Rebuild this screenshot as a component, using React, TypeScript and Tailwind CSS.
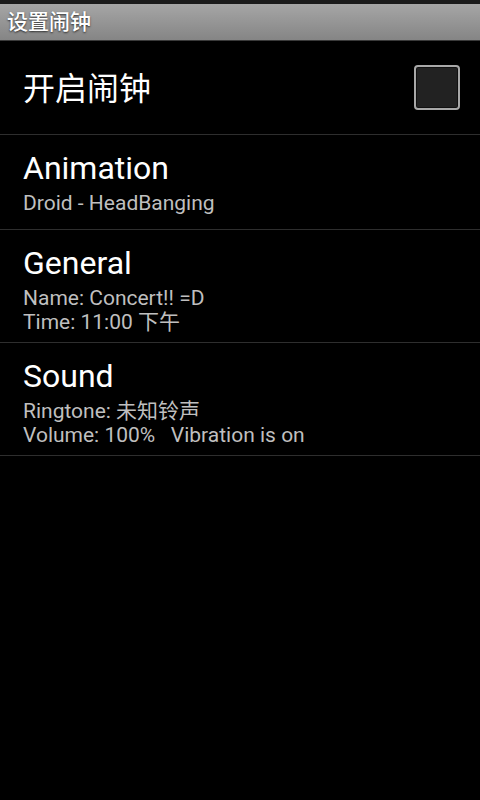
const font = { fontFamily: 'Roboto, "Noto Sans CJK SC", sans-serif' };

interface Pref {
  title: string;
  lines: string[];
}

const prefs: Pref[] = [
  { title: 'Animation', lines: ['Droid - HeadBanging'] },
  { title: 'General', lines: ['Name: Concert!! =D', 'Time: 11:00 下午'] },
  { title: 'Sound', lines: ['Ringtone: 未知铃声', 'Volume: 100%\u00a0\u00a0\u00a0Vibration is on'] },
];

export default function App() {
  return (
    <div className="w-[480px] h-[800px] bg-black flex flex-col" style={font}>
      {/* status strip + window title */}
      <div className="h-[4px] bg-[#1c1c1c]" />
      <div className="h-[37px] bg-gradient-to-b from-[#a6a6a6] to-[#858585] border-b border-[#3a3a3a] flex items-center px-[7px]">
        <span className="text-white text-[21px] leading-none font-medium [text-shadow:0_1px_2px_rgba(0,0,0,0.7)]">
          设置闹钟
        </span>
      </div>

      {/* enable row */}
      <div className="h-[94px] shrink-0 flex items-center justify-between pl-[23px] pr-[20px] border-b border-[#2e2e2e]">
        <span className="text-white text-[32px] leading-[38px] pt-[2px]">开启闹钟</span>
        <div className="w-[46px] h-[45px] rounded-[4px] border-2 border-[#a8a8a8] bg-[#222] shadow-[inset_0_0_0_1px_#111]" />
      </div>

      {prefs.map((p) => (
        <div key={p.title} className="min-h-[95px] pl-[23px] pt-[14px] pb-[8px] border-b border-[#2e2e2e]">
          <div className="text-white text-[32px] leading-[38px]">{p.title}</div>
          <div className="mt-[4px]">
            {p.lines.map((l) => (
              <div key={l} className="text-[#bfbfbf] text-[21px] leading-[24px]">
                {l}
              </div>
            ))}
          </div>
        </div>
      ))}
    </div>
  );
}
